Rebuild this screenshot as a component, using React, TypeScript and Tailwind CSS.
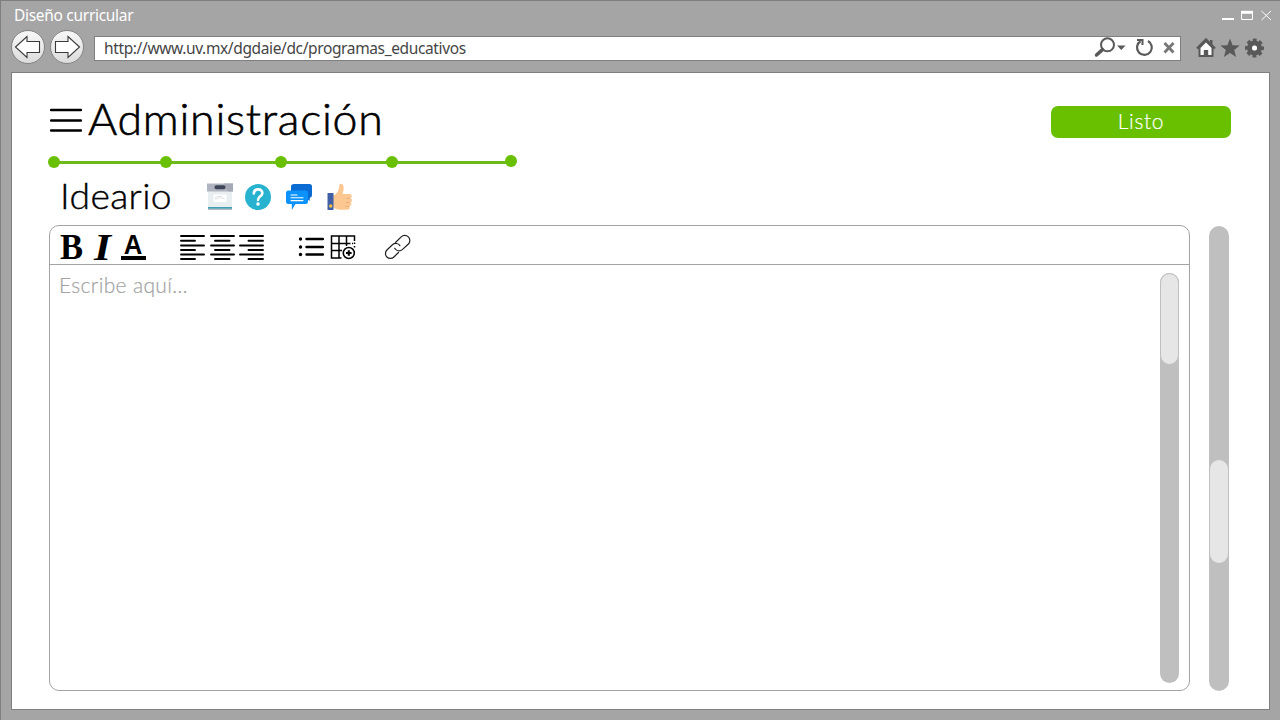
import type { ReactNode } from "react";

function NavButton({ flip = false }: { flip?: boolean }) {
  return (
    <button className="flex size-[34px] items-center justify-center rounded-full border border-[#858585] bg-linear-to-b from-[#f8f8f8] to-[#dcdcdc]">
      <svg width="28" height="24" viewBox="0 0 28 24" className={`shrink-0 ${flip ? "-scale-x-100" : ""}`}>
        <path d="M1.500 12 13 1.500V6.500H25.500V17.500H13V22.500Z" fill="#fff" stroke="#3a3a3a" strokeWidth="1.100" />
      </svg>
    </button>
  );
}

function TitleBar() {
  return (
    <div className="flex h-[28px] items-center justify-between pl-[13px] pr-[8px]">
      <span className="text-[15.500px] leading-[28px] -tracking-[0.300px] text-white">Diseño curricular</span>
      <svg width="50" height="12" viewBox="0 0 50 12" fill="none" stroke="#fff" className="shrink-0">
        <path d="M0 10H12" strokeWidth="2" />
        <path d="M19.500 3V10.500H30.500V3" strokeWidth="1" />
        <path d="M19 3.300H31" strokeWidth="3" />
        <path d="M39.500 2 49 11M49 2 39.500 11" strokeWidth="1" />
      </svg>
    </div>
  );
}

function AddressBar() {
  return (
    <div className="mt-px flex h-[25px] w-[1087px] items-center justify-between border border-[#7f7f7f] bg-white pl-[9px]">
      <span className="text-[15.500px] leading-[23px] -tracking-[0.370px] text-[#454545]">
        http://www.uv.mx/dgdaie/dc/programas_educativos
      </span>
      <svg width="86" height="22" viewBox="0 0 86 22" fill="none" stroke="#595959">
        <circle cx="13.500" cy="7.800" r="6.500" strokeWidth="2" />
        <path d="M8.500 12.600 2.500 18" strokeWidth="3.500" strokeLinecap="round" />
        <path d="M23 8.500H31.500L27.300 13Z" fill="#595959" stroke="none" />
        <path d="M54 4A7.400 7.400 0 1 1 46.500 4.200" strokeWidth="2.200" />
        <path d="M43 3H48.500V8" strokeWidth="2" />
        <path d="M70.500 6 79.500 15.500M79.500 6 70.500 15.500" stroke="#777" strokeWidth="2.800" />
      </svg>
    </div>
  );
}

function BrowserIcons() {
  return (
    <div className="ml-[15px] flex items-center gap-[4px]">
      <svg width="20" height="20" viewBox="0 0 20 20">
        <path d="M14 2H16.500V8H14Z" fill="#595959" />
        <path d="M3.500 9.500 10 3 16.500 9.500V18H3.500Z" fill="#fff" stroke="#595959" strokeWidth="2" />
        <path d="M1 10.500 10 1.500 19 10.500" fill="none" stroke="#595959" strokeWidth="2.400" />
        <path d="M7.800 12H12.200V18H7.800Z" fill="#595959" />
      </svg>
      <svg width="20" height="20" viewBox="0 0 20 20" fill="#595959">
        <path d="m10 .5 2.600 6.700 7.100.3-5.500 4.500 1.900 7-6.100-4-6.100 4 1.900-7L.3 7.500l7.100-.3Z" />
      </svg>
      <svg width="20" height="20" viewBox="0 0 20 20" fill="none" stroke="#595959">
        <circle cx="10.500" cy="10" r="5" strokeWidth="5" />
        <circle cx="10.500" cy="10" r="8" strokeWidth="3" strokeDasharray="3.700 2.583" strokeDashoffset="1.850" />
        <circle cx="10.500" cy="10" r="2.500" fill="#fff" stroke="none" />
      </svg>
    </div>
  );
}

function Stepper() {
  const dot = "size-3 shrink-0 rounded-full bg-[#68c000]";
  const line = "-mx-px h-[3px] shrink-0 bg-[#6dba1c]";
  return (
    <div className="ml-[36px] mt-[13px] flex h-3 items-center">
      <span className={dot} />
      <span className={`${line} w-[101.500px]`} />
      <span className={dot} />
      <span className={`${line} w-[105px]`} />
      <span className={dot} />
      <span className={`${line} w-[101px]`} />
      <span className={dot} />
      <span className={`${line} w-[109.500px]`} />
      <span className={`${dot} -mt-0.5`} />
    </div>
  );
}

function SectionIcons() {
  return (
    <div className="-mt-px flex items-center">
      <svg width="26" height="28" viewBox="0 0 26 28">
        <path d="M1 8H25V27H1Z" fill="#e9eef0" />
        <path d="M1 24H25V25.800H1Z" fill="#3f9fb0" />
        <path d="M1 25.800H25V27H1Z" fill="#b2bcc0" />
        <path d="M0 .5H26V8.500H0Z" fill="#afb5c0" />
        <path d="M17 .5H26V8.500H21Z" fill="#a3a9b5" />
        <rect x="7.500" y="2.200" width="11" height="4" rx="1.800" fill="#3f4558" />
        <path d="M6.500 11.500H19.500V19H6.500Z" fill="#fff" />
        <path d="M8.500 16.500V14.500L10 13.500H15M10 16.500V15H17V16.500" fill="none" stroke="#d4d9dc" strokeWidth=".7" />
      </svg>
      <svg width="26" height="28" viewBox="0 0 26 28" className="ml-3">
        <circle cx="13" cy="14" r="13" fill="#27b3cf" />
        <path d="M8.800 10.500C9.200 4.800 17.800 5.300 17.300 10.300 17 13.500 13 13.200 13 17" fill="none" stroke="#fff" strokeWidth="2.600" strokeLinecap="round" />
        <circle cx="13" cy="21" r="1.800" fill="#fff" />
      </svg>
      <svg width="26" height="28" viewBox="0 0 26 28" className="ml-[15px]">
        <path d="M8 1H23.500Q26 1 26 3.500V12Q26 14.500 24 14.500L23.500 18 19 14.500H8Q5 14.500 5 12V3.500Q5 1 8 1Z" fill="#0a6bd2" />
        <path d="M2.500 7.500H19.500Q22 7.500 22 10V18.500Q22 21 19.500 21H9.500L5.800 27V21H2.500Q0 21 0 18.500V10Q0 7.500 2.500 7.500Z" fill="#0b92fb" />
        <path d="M5 12H11M5 14.800H17M5 17.600H17" stroke="#fff" strokeWidth="1.100" strokeLinecap="round" />
      </svg>
      <svg width="26" height="28" viewBox="0 0 26 28" className="ml-[15px]">
        <path d="M6 12.500C9 12 12 8 12.200 3Q12.300.7 14 .7C17 .7 17.500 5 15.500 11H22.500Q25 11.300 24.700 13.500 24.500 15 23 15.200 25.500 15.500 24.800 18 24.500 19 23 19.500 25 20 24 22.200 23.500 23.200 22 23.300 23.500 24 22.500 25.800 21.800 26.800 20 26.800H12Q9 26.800 6 24Z" fill="#fdc792" />
        <path d="M23 15.300H19.500M23 19.500H19M22 23.400H18.500" stroke="#e9aa70" strokeWidth=".8" />
        <path d="M.500 10H6.500V27H.500Z" fill="#405fa5" />
        <circle cx="3.700" cy="23" r="1.700" fill="#f5bd43" />
      </svg>
    </div>
  );
}

function LinesIcon({ short }: { short: string }) {
  return (
    <svg width="26" height="26" viewBox="0 0 26 26" stroke="#000" strokeWidth="1.900" strokeLinecap="round">
      <path d="M2 2H25M2 11.500H25M2 20.500H25" />
      <path d={short} />
    </svg>
  );
}

function Toolbar() {
  return (
    <div className="flex h-[39px] items-center border-b border-[#a3a3a3] pl-[10px] pt-[3px] text-black">
      <span className="w-[25px] font-['Liberation_Serif',serif] text-[36px] font-bold leading-[36px]">
        <span className="inline-block origin-left scale-x-[0.96]">B</span>
      </span>
      <span className="ml-[9px] mt-px w-[19px] font-['Liberation_Serif',serif] text-[38px] font-bold italic leading-[36px]">
        <span className="inline-block origin-left scale-x-[1.15]">I</span>
      </span>
      <span className="ml-[8px] flex h-[26px] w-[25px] flex-col items-center border-b-4 border-black font-['Liberation_Sans',sans-serif] text-[28px] font-bold leading-[22px]">
        <span className="inline-block scale-x-[0.92]">A</span>
      </span>
      <div className="ml-[33px] flex gap-[3.500px]">
        <LinesIcon short="M2 6.700H16M2 16H16M2 25H16" />
        <LinesIcon short="M6 6.700H20.500M6 16H20.500M6 25H20.500" />
        <LinesIcon short="M10.500 6.700H25M10.500 16H25M10.500 25H25" />
      </div>
      <svg width="26" height="26" viewBox="0 0 26 26" className="ml-[34px]">
        <path d="M8.500 5H25M8.500 13H25M8.500 20.500H25" stroke="#000" strokeWidth="2.400" strokeLinecap="round" />
        <circle cx="2.500" cy="5" r="1.700" />
        <circle cx="2.500" cy="13" r="1.700" />
        <circle cx="2.500" cy="20.500" r="1.700" />
      </svg>
      <svg width="26" height="26" viewBox="0 0 26 26" className="ml-[6px]" fill="none" stroke="#000" strokeWidth="1.500">
        <path d="M11.500 24H1.500V2H24.500V7M1.500 9.500H20.500M1.500 16.500H12M9 2V24M16.500 2V12" />
        <path d="M24.500 8.500V10M24.500 12V13.500M22 9.500H23" />
        <circle cx="18.800" cy="19" r="5.500" />
        <path d="M16 19H21.600M18.800 16.200V21.800" strokeWidth="2.100" />
      </svg>
      <svg width="27" height="26" viewBox="0 0 27 26" className="ml-[28px]" fill="none" stroke="#222" strokeWidth="1.200" strokeLinecap="round">
        <path d="M11.500 8.500 17.200 2.900A4.900 4.900 0 0 1 24.400 10L18.300 15.600A5 5 0 0 1 10.700 14.300" />
        <path d="M15.900 11.600A5 5 0 0 0 8.700 10.500L2.900 16A4.900 4.900 0 0 0 9.900 23L14.500 18.500" />
      </svg>
    </div>
  );
}

function Track({ className, children }: { className: string; children: ReactNode }) {
  return <div className={`shrink-0 rounded-full bg-[#bfbfbf] ${className}`}>{children}</div>;
}

export default function App() {
  return (
    <div className="flex h-[720px] w-[1280px] flex-col overflow-hidden border-l border-t border-[#7f7f7f] bg-[#a5a5a5] font-['Noto_Sans',sans-serif]">
      <TitleBar />
      <div className="flex h-[37px] items-center pl-[10px]">
        <div className="mb-[2px] mr-[10px] flex gap-[5px]">
          <NavButton />
          <NavButton flip />
        </div>
        <AddressBar />
        <BrowserIcons />
      </div>
      <main className="ml-[10px] mt-[6px] flex h-[638px] w-[1259px] flex-col border border-[#7f7f7f] bg-white font-['Lato',sans-serif] font-light text-black">
        <header className="mt-[26px] flex h-[44px] items-center pl-[38px] pr-[38px]">
          <svg width="32" height="26" viewBox="0 0 32 26" stroke="#000" strokeWidth="2.400" strokeLinecap="round" className="-mt-px">
            <path d="M1 2H31M1 12.500H31M1 22.500H31" />
          </svg>
          <h1 className="-mt-[5px] ml-[6px] origin-left scale-x-[1.050] text-[42.500px] leading-[44px] tracking-[0.700px] [-webkit-text-stroke:0.600px_#000]">Administración</h1>
          <button className="ml-auto mt-[2px] h-8 w-[180px] rounded-[7px] bg-[#68c000] pb-[2px] text-[21px] leading-[30px] tracking-[0.700px] text-white [-webkit-text-stroke:0.200px_#fff]">
            Listo
          </button>
        </header>
        <Stepper />
        <div className="mt-[6px] flex h-[46px] items-center pl-[48px]">
          <h2 className="-mt-[2px] w-[147px] origin-left scale-x-[1.050] text-[35.500px] leading-[46px] tracking-[0.350px] [-webkit-text-stroke:0.400px_#000]">Ideario</h2>
          <SectionIcons />
        </div>
        <div className="mt-[5px] flex">
          <section className="ml-[37px] h-[466px] w-[1141px] rounded-[10px] border border-[#a3a3a3]">
            <Toolbar />
            <div className="flex h-[425px] justify-between pl-[9px] pr-[10px] pt-[8px]">
              <p className="-mt-px text-[21px] leading-[26px] tracking-[0.350px] text-[#a3a3a3] [-webkit-text-stroke:0.200px_#a3a3a3]">Escribe aquí…</p>
              <Track className="h-[410px] w-[19px]">
                <div className="h-[92px] rounded-full border border-[#bfbfbf] bg-[#e7e6e6]" />
              </Track>
            </div>
          </section>
          <Track className="ml-[19px] mt-px h-[465px] w-5 px-px pt-[234px]">
            <div className="h-[103px] rounded-full bg-[#e7e6e6]" />
          </Track>
        </div>
      </main>
    </div>
  );
}
